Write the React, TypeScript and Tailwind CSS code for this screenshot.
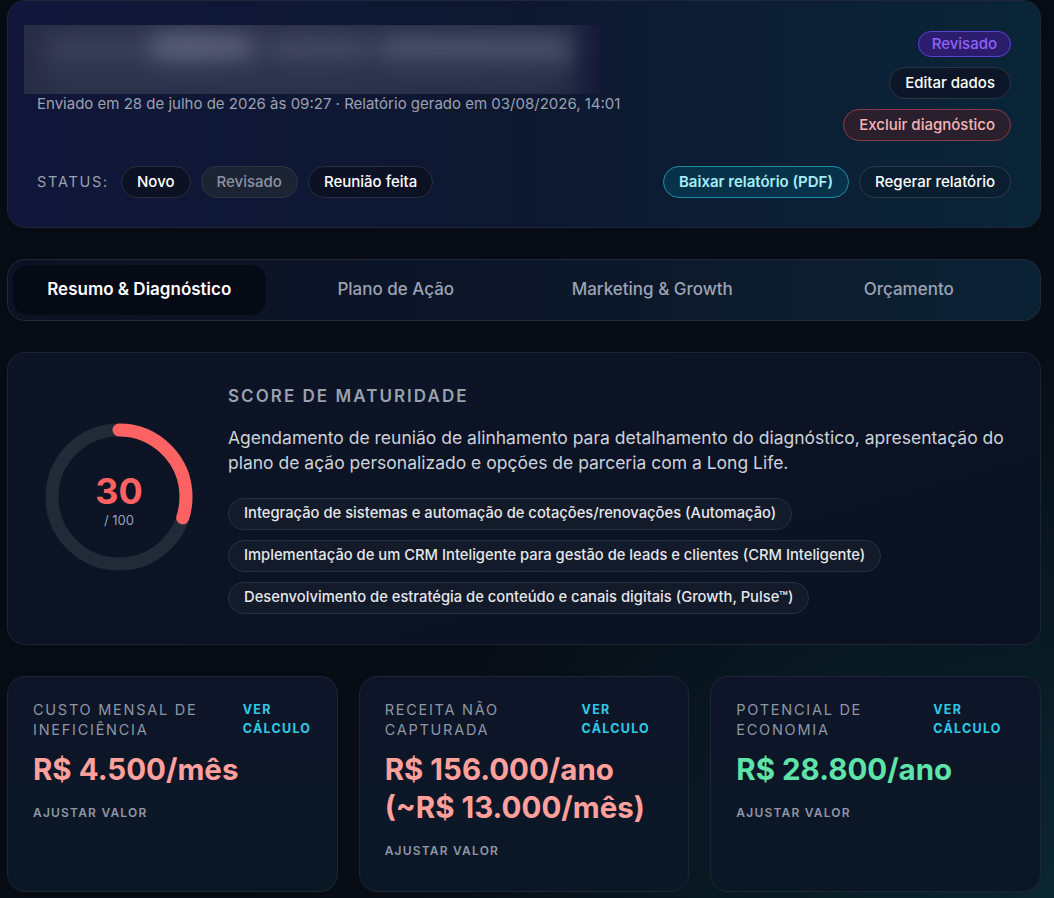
import React from "react";

const font = { fontFamily: "Inter, 'Noto Sans', sans-serif" };

function Pill({ children, muted }: { children: React.ReactNode; muted?: boolean }) {
  return (
    <span
      className={
        "inline-flex h-[32px] items-center rounded-full border px-[15px] text-[15px] font-medium " +
        (muted
          ? "border-[#2c3446] bg-[#1c2333] text-[#8b93a3]"
          : "border-[#262e40] bg-[#0c1224] text-white")
      }
    >
      {children}
    </span>
  );
}

function Gauge({ value }: { value: number }) {
  const r = 67;
  const c = 2 * Math.PI * r;
  return (
    <div className="relative -mt-[3px] h-[148px] w-[148px] shrink-0">
      <svg width="148" height="148" viewBox="0 0 148 148" className="-rotate-90">
        <circle cx="74" cy="74" r={r} fill="none" stroke="#222a38" strokeWidth="13" />
        <circle
          cx="74"
          cy="74"
          r={r}
          fill="none"
          stroke="#ff6262"
          strokeWidth="13"
          strokeLinecap="round"
          strokeDasharray={`${(c * value) / 100} ${c}`}
        />
      </svg>
      <div className="absolute inset-0 flex flex-col items-center justify-center pt-[4px]">
        <span className="text-[36px] font-bold leading-[40px] text-[#ff6262]">{value}</span>
        <span className="mt-[1px] text-[13px] leading-[16px] text-[#9aa1ad]">/ 100</span>
      </div>
    </div>
  );
}

// bloco borrado do nome do cliente (conteúdo ocultado)
function BlurredTitle() {
  return (
    <div className="relative -ml-[13px] h-[69px] w-[576px] overflow-hidden bg-gradient-to-r from-[#282d47] via-[#292e46] to-[#1f2742]">
      <div className="absolute left-[20px] top-[10px] h-[30px] w-[170px] rounded-full bg-[#50567280] blur-[12px]" />
      <div className="absolute left-[125px] top-[8px] h-[32px] w-[110px] rounded-full bg-[#5a6078] blur-[12px]" />
      <div className="absolute left-[240px] top-[12px] h-[26px] w-[110px] rounded-full bg-[#484e68] blur-[12px]" />
      <div className="absolute left-[350px] top-[10px] h-[30px] w-[200px] rounded-full bg-[#4e546c] blur-[12px]" />
      <div className="absolute left-[20px] top-[44px] h-[20px] w-[520px] rounded-full bg-[#323852] blur-[12px]" />
      <div className="absolute inset-y-0 right-0 w-[30px] bg-gradient-to-r from-transparent to-[#141a38]" />
    </div>
  );
}

function MetricCard({
  title,
  value,
  color,
}: {
  title: string;
  value: React.ReactNode;
  color: string;
}) {
  return (
    <div className="rounded-[18px] border border-[#1d2535] bg-gradient-to-b from-[#0e1528] to-[#0a1826] px-[25px] pt-[23px] pb-[31px]">
      <div className="flex justify-between gap-4">
        <div className="text-[14.5px] leading-[20px] tracking-[0.12em] text-[#8f97a6]">{title}</div>
        <div className="text-[12.5px] font-bold leading-[19px] tracking-[0.1em] text-[#2ecbe6]">
          VER CÁLCULO
        </div>
      </div>
      <div className={"mt-[10px] text-[29.5px] font-bold leading-[38px] " + color}>{value}</div>
      <div className="mt-[16px] text-[12px] font-semibold tracking-[0.1em] text-[#8f97a6]">
        AJUSTAR VALOR
      </div>
    </div>
  );
}

export default function App() {
  return (
    <div
      style={font}
      className="min-h-[898px] w-full bg-[radial-gradient(ellipse_at_100%_100%,#0a2630_0%,#070c15_45%,#070b13_100%)] pl-[7px] pr-[13px]"
    >
      <div className="flex flex-col gap-[31px]">
        {/* Cabeçalho */}
        <div className="rounded-[18px] border border-[#1e2638] bg-gradient-to-r from-[#11163a] via-[#0d1830] to-[#0a2538] px-[29px] pt-[24px] pb-[29px]">
          <div className="flex items-start justify-between">
            <div>
              <BlurredTitle />
              <p className="mt-[0px] text-[15px] leading-[20px] text-[#9aa1b0]">
                Enviado em 28 de julho de 2026 às 09:27 · Relatório gerado em 03/08/2026, 14:01
              </p>
            </div>
            <div className="flex flex-col items-end gap-[10px] pt-[6px]">
              <span className="inline-flex h-[26px] items-center rounded-full border border-[#5b3fd6] bg-[#2c1c6e] px-[13px] text-[15px] font-medium text-[#8f63f5]">
                Revisado
              </span>
              <span className="inline-flex h-[32px] items-center rounded-full border border-[#2a3448] bg-[#0c1628] px-[15px] text-[15px] font-medium text-white">
                Editar dados
              </span>
              <span className="inline-flex h-[32px] items-center rounded-full border border-[#8a3a48] bg-[#2a1f2c] px-[15px] text-[15px] font-medium text-[#f7b4b4]">
                Excluir diagnóstico
              </span>
            </div>
          </div>

          <div className="mt-[25px] flex items-center justify-between">
            <div className="flex items-center gap-[10px]">
              <span className="mr-[2px] text-[14.5px] tracking-[0.12em] text-[#9aa1b0]">STATUS:</span>
              <Pill>Novo</Pill>
              <Pill muted>Revisado</Pill>
              <Pill>Reunião feita</Pill>
            </div>
            <div className="flex items-center gap-[10px]">
              <span className="inline-flex h-[32px] items-center rounded-full border border-[#1b8ea6] bg-[#08324a] px-[15px] text-[15px] font-semibold text-[#a3eef9]">
                Baixar relatório (PDF)
              </span>
              <span className="inline-flex h-[32px] items-center rounded-full border border-[#2a3a4c] bg-[#0a1e30] px-[15px] text-[15px] font-medium text-white">
                Regerar relatório
              </span>
            </div>
          </div>
        </div>

        {/* Abas */}
        <div className="grid grid-cols-4 gap-[4px] rounded-[18px] border border-[#1e2a3c] bg-gradient-to-r from-[#0c1224] via-[#0c1628] to-[#0b2234] p-[5px]">
          <div className="flex h-[50px] items-center justify-center rounded-[15px] bg-[#060a15] text-[17px] font-semibold text-white">
            Resumo &amp; Diagnóstico
          </div>
          <div className="flex h-[50px] items-center justify-center text-[17px] font-medium text-[#9ba3b2]">
            Plano de Ação
          </div>
          <div className="flex h-[50px] items-center justify-center text-[17px] font-medium text-[#9ba3b2]">
            Marketing &amp; Growth
          </div>
          <div className="flex h-[50px] items-center justify-center text-[17px] font-medium text-[#9ba3b2]">
            Orçamento
          </div>
        </div>

        {/* Score */}
        <div className="flex items-center gap-[35px] rounded-[18px] border border-[#1d2535] bg-gradient-to-br from-[#0c1426] to-[#0a1222] pt-[31px] pb-[30px] pl-[37px] pr-[30px]">
          <Gauge value={30} />
          <div>
            <div className="text-[17px] font-semibold tracking-[0.12em] text-[#9aa1ad]">
              SCORE DE MATURIDADE
            </div>
            <p className="mt-[15px] text-[17.5px] leading-[25px] text-[#cdd2da]">
              Agendamento de reunião de alinhamento para detalhamento do diagnóstico, apresentação do
              plano de ação personalizado e opções de parceria com a Long Life.
            </p>
            <div className="mt-[23px] flex flex-col items-start gap-[10px]">
              {[
                "Integração de sistemas e automação de cotações/renovações (Automação)",
                "Implementação de um CRM Inteligente para gestão de leads e clientes (CRM Inteligente)",
                "Desenvolvimento de estratégia de conteúdo e canais digitais (Growth, Pulse™)",
              ].map((t) => (
                <span
                  key={t}
                  className="inline-flex h-[32px] items-center rounded-full border border-[#272f40] bg-[#131a29] px-[15px] text-[14.75px] font-medium text-[#e6e8ec]"
                >
                  {t}
                </span>
              ))}
            </div>
          </div>
        </div>

        {/* Métricas */}
        <div className="grid grid-cols-3 gap-[21px] pb-[6px]">
          <MetricCard title="CUSTO MENSAL DE INEFICIÊNCIA" value="R$ 4.500/mês" color="text-[#ffa09c]" />
          <MetricCard
            title="RECEITA NÃO CAPTURADA"
            value={
              <>
                R$ 156.000/ano
                <br />
                (~R$ 13.000/mês)
              </>
            }
            color="text-[#ffa09c]"
          />
          <MetricCard title="POTENCIAL DE ECONOMIA" value="R$ 28.800/ano" color="text-[#5ee3a8]" />
        </div>
      </div>
    </div>
  );
}
